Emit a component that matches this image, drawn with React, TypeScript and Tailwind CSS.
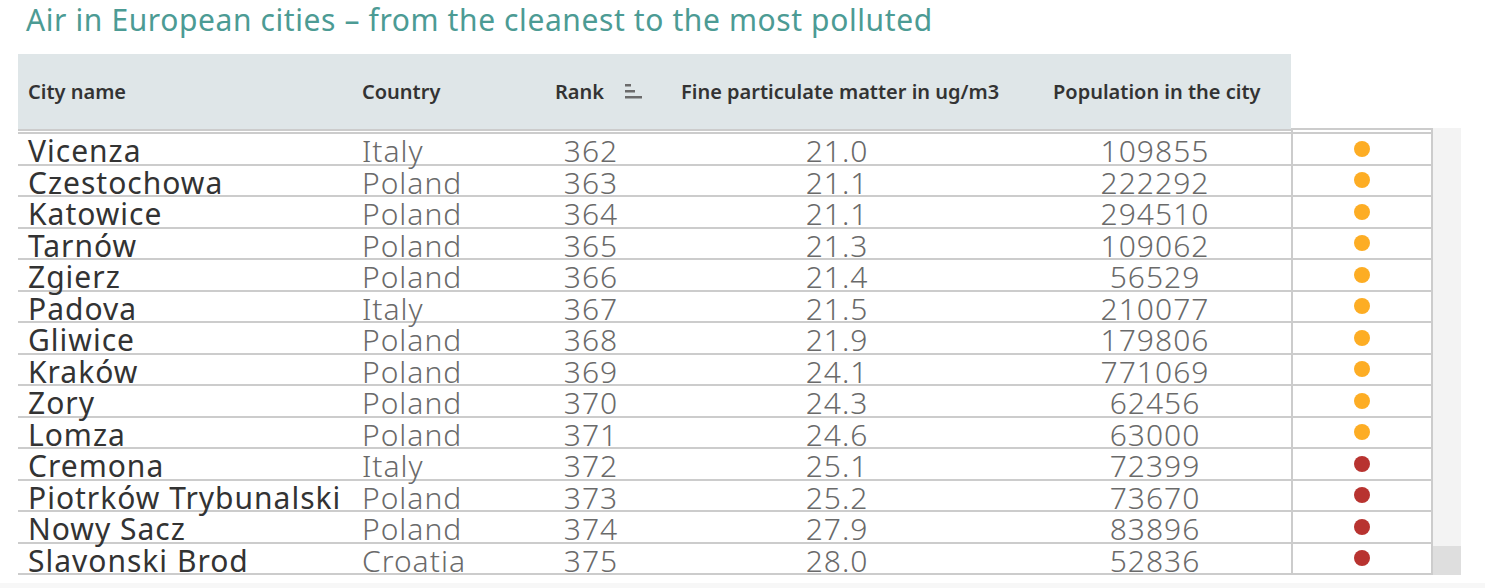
import React from "react";

type Row = { city: string; country: string; rank: number; pm: string; pop: number; level: "high" | "severe" };

const rows: Row[] = [
  { city: "Vicenza", country: "Italy", rank: 362, pm: "21.0", pop: 109855, level: "high" },
  { city: "Czestochowa", country: "Poland", rank: 363, pm: "21.1", pop: 222292, level: "high" },
  { city: "Katowice", country: "Poland", rank: 364, pm: "21.1", pop: 294510, level: "high" },
  { city: "Tarnów", country: "Poland", rank: 365, pm: "21.3", pop: 109062, level: "high" },
  { city: "Zgierz", country: "Poland", rank: 366, pm: "21.4", pop: 56529, level: "high" },
  { city: "Padova", country: "Italy", rank: 367, pm: "21.5", pop: 210077, level: "high" },
  { city: "Gliwice", country: "Poland", rank: 368, pm: "21.9", pop: 179806, level: "high" },
  { city: "Kraków", country: "Poland", rank: 369, pm: "24.1", pop: 771069, level: "high" },
  { city: "Zory", country: "Poland", rank: 370, pm: "24.3", pop: 62456, level: "high" },
  { city: "Lomza", country: "Poland", rank: 371, pm: "24.6", pop: 63000, level: "high" },
  { city: "Cremona", country: "Italy", rank: 372, pm: "25.1", pop: 72399, level: "severe" },
  { city: "Piotrków Trybunalski", country: "Poland", rank: 373, pm: "25.2", pop: 73670, level: "severe" },
  { city: "Nowy Sacz", country: "Poland", rank: 374, pm: "27.9", pop: 83896, level: "severe" },
  { city: "Slavonski Brod", country: "Croatia", rank: 375, pm: "28.0", pop: 52836, level: "severe" },
];

function SortIcon() {
  return (
    <svg width="18" height="15" viewBox="0 0 18 15" className="ml-[21px]">
      <rect x="0" y="0" width="6" height="2.5" fill="#6b6b6b" />
      <rect x="0" y="6" width="10" height="2.5" fill="#6b6b6b" />
      <rect x="0" y="12" width="17" height="2.5" fill="#6b6b6b" />
    </svg>
  );
}

export default function App() {
  return (
    <div className="relative w-[1485px] h-[588px] bg-white overflow-hidden font-['Noto_Sans',sans-serif]">
      {/* Title */}
      <div className="pl-[26px] h-[54px] text-[30px] leading-[39px] tracking-[0.6px] text-[#4c9b94] whitespace-nowrap">
        Air in European cities – from the cleanest to the most polluted
      </div>

      {/* Header */}
      <div className="ml-[18px] w-[1273px] h-[75px] bg-[#dfe6e8] flex items-center text-[20px] font-semibold text-[#333] whitespace-nowrap">
        <div className="w-[336px] shrink-0 pl-[10px]">City name</div>
        <div className="w-[166px] shrink-0 pl-[8px]">Country</div>
        <div className="w-[142px] shrink-0 flex items-center pl-[35px]">
          Rank
          <SortIcon />
        </div>
        <div className="w-[350px] shrink-0 pl-[19px]">Fine particulate matter in ug/m3</div>
        <div className="w-[279px] shrink-0 pl-[41px]">Population in the city</div>
      </div>

      {/* Body */}
      <div className="flex">
        <div className="ml-[18px] w-[1273px]">
          <div className="h-[5px] border-t-2 border-b-2 border-[#cccccc] bg-white" />
          {rows.map((r) => (
            <div
              key={r.city}
              className="h-[31.5px] pt-[4px] flex items-center border-b-2 border-[#cccccc] text-[30px] leading-[29px] tracking-[1px] whitespace-nowrap"
            >
              <div className="w-[336px] shrink-0 pl-[10px] text-[#333]">{r.city}</div>
              <div className="w-[166px] shrink-0 pl-[8px] text-[#6a6a6a] font-light">{r.country}</div>
              <div className="w-[142px] shrink-0 text-center text-[#6a6a6a] font-light">{r.rank}</div>
              <div className="w-[350px] shrink-0 text-center text-[#6a6a6a] font-light">{r.pm}</div>
              <div className="w-[279px] shrink-0 pl-[7px] text-center text-[#6a6a6a] font-light">{r.pop}</div>
            </div>
          ))}
        </div>

        <div className="flex -mt-[1px]">
          <div className="w-[142px] border-l-2 border-r-2 border-[#cccccc]">
            <div className="h-[6px] border-t-2 border-b-2 border-[#cccccc]" />
            {rows.map((r) => (
              <div key={r.city} className="h-[31.5px] flex items-center justify-center border-b-2 border-[#cccccc]">
                <span
                  className={
                    r.level === "high"
                      ? "w-[16px] h-[16px] rounded-full bg-[#fdad24]"
                      : "w-[16px] h-[16px] rounded-full bg-[#b83330]"
                  }
                />
              </div>
            ))}
          </div>
          <div className="w-[28px] bg-[#f3f3f3] flex flex-col justify-end">
            <div className="h-[29px] bg-[#dedede]" />
          </div>
        </div>
      </div>

      {/* Bottom strip */}
      <div className="absolute left-0 right-0 bottom-0 h-[5px] bg-[#f7f7f7]" />
    </div>
  );
}
